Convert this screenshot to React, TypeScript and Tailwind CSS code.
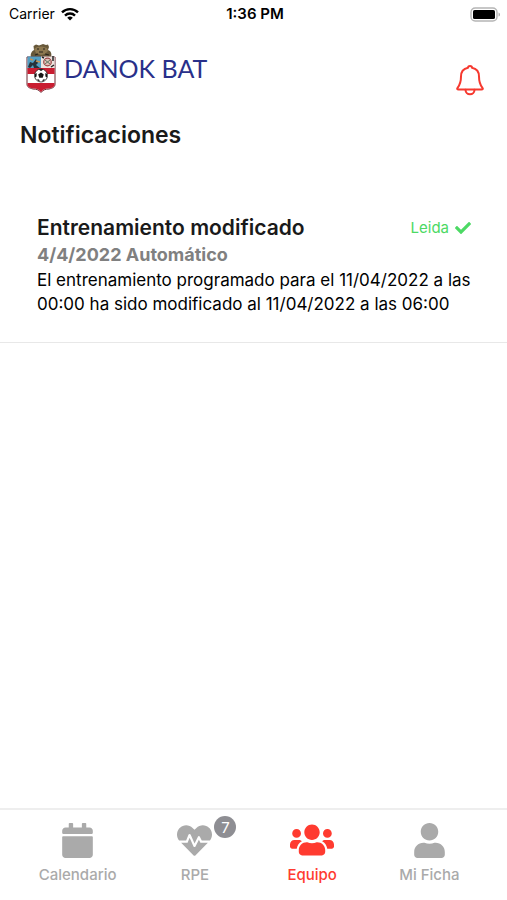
import type { ReactNode } from "react";
import { FaCalendar, FaCheck, FaHeartbeat, FaUser, FaUsers } from "react-icons/fa";

function WifiIcon() {
  return (
    <svg viewBox="0 0 18 14" className="h-[14px] w-[18px]" aria-hidden="true">
      <g fill="none" stroke="#000" strokeWidth="2.4">
        <path d="M1 5.4a11.4 11.4 0 0 1 16 0" />
        <path d="M4 8.6a7.1 7.1 0 0 1 10 0" />
      </g>
      <path d="M9 13.6 6.2 10.8a4 4 0 0 1 5.6 0z" />
    </svg>
  );
}

function BatteryIcon() {
  return (
    <svg viewBox="0 0 31 15" className="h-[15px] w-[31px]" aria-hidden="true">
      <rect x="1" y="1" width="26" height="13" rx="4.2" fill="#fff" stroke="#b5b5b5" strokeWidth="1.4" />
      <rect x="3" y="3" width="22" height="9" rx="1.6" />
      <path d="M28.6 5.4c1.7.6 1.7 3.6 0 4.2z" fill="#a0a0a0" />
    </svg>
  );
}

function BellIcon() {
  return (
    <svg viewBox="0 0 28 32" className="h-8 w-7" fill="none" stroke="#f6392f" strokeWidth="2" strokeLinejoin="round" strokeLinecap="round" aria-hidden="true">
      <path d="M12 3.700C12 1.300 16 1.300 16 3.700c4.300.8 7 4.200 7 8.800 0 6.500 1.200 8.500 3.400 11.300.8 1.100.4 1.700-.9 1.700h-23c-1.300 0-1.700-.6-.9-1.700C3.800 21 5 19 5 12.500c0-4.600 2.700-8 7-8.800z" />
      <path d="M9.500 25.800a4.500 4.500 0 0 0 9 0" />
    </svg>
  );
}

function Crest() {
  return (
    <svg viewBox="0 0 30 50" className="h-[50px] w-[30px]" aria-hidden="true">
      <path d="M5 14C4 11 6 8 8 7L7.500 3 10 1.500 13 2.500 17 1 20 2 22 1.500 23 4 22 7c3 1 4 4 3 7z" fill="#67583a" />
      <path d="M8 6 11 4 16 3.500l5 1.500 1 3-3 3-4 1-5-2z" fill="#8d7850" />
      <path d="M11 6h2M17 6h2M13 9h4M9 12l3-1M19 11l4 1" stroke="#29251c" strokeWidth="1.200" />
      <path d="M1 14h28v27c0 3-2 4-6 5-4 0-6 1-8 3.500C13 47 11 46 7 46c-4-1-6-2-6-5z" fill="#fff" stroke="#6c2931" />
      <path d="M1.500 13.500H15V25H1.500z" fill="#529fc4" />
      <path d="M2 24l2-5 3 1 3-4 2 4-2 2 4 3H8l-1-3-3 3z" fill="#25323b" />
      <path d="M4 16l3 1M10 18l4 1" stroke="#c49252" strokeWidth="1.500" />
      <path d="M15 13.500h13.500V25H15z" fill="#eee5e0" />
      <circle cx="21.500" cy="19" r="3.800" fill="#dfc1b7" stroke="#9b4848" strokeWidth="1.200" />
      <path d="m19 17 5 4m0-4-5 4" stroke="#607661" strokeWidth="1" />
      <path d="M27 13v5M16 14l2 1M25 24l3-2" stroke="#252525" strokeWidth="1.500" />
      <path d="M1.500 25h27v6h-27zM1.500 40h27v1.500c0 2.500-2 3.500-6 4-4 .2-6 1.500-7.500 3.500-1.500-2-3.500-3.300-7.500-3.500-4-.5-6-1.500-6-4z" fill="#c91d31" />
      <circle cx="15" cy="32.500" r="6.500" fill="#fff" stroke="#222" strokeWidth=".8" />
      <path d="m15 29.500 2.800 2-1.100 3.300h-3.400l-1.100-3.300zM12.500 26.600q2.500-1 5 0l-2.500 1.500zM8.900 30.900l1.800-.8-.1 3.300-1.600 1.100zM21.100 30.900l-1.800-.8.1 3.300 1.600 1.100zM11 36.300l2 .2.900 2q-2-.5-2.900-2.200zM19 36.300l-2 .2-.9 2q2-.5 2.900-2.200z" fill="#171717" />
    </svg>
  );
}

function Tab({ label, icon, badge, active = false }: { label: string; icon: ReactNode; badge?: number; active?: boolean }) {
  return (
    <button
      type="button"
      aria-current={active ? "page" : undefined}
      className={`flex flex-col items-center gap-[7px] text-[15px] leading-5 font-medium ${active ? "text-[#ff3b30]" : "text-[#aaaaaa]"}`}
    >
      <span className="relative flex h-9 items-center">
        {icon}
        {badge !== undefined && (
          <span className="absolute -top-[6px] left-full ml-[2px] flex size-[22px] items-center justify-center rounded-full bg-[#8e8e93] text-[15px] leading-none font-normal text-white">
            {badge}
          </span>
        )}
      </span>
      {label}
    </button>
  );
}

export default function App() {
  return (
    <div className="flex min-h-screen flex-col bg-white font-['Inter',sans-serif] text-[#1a1a1a]">
      <div className="grid h-7 grid-cols-3 items-center pr-[6px] pl-[9px] text-sm text-black">
        <div className="flex items-center gap-[6px]">
          <span>Carrier</span>
          <WifiIcon />
        </div>
        <span className="text-center text-[15px] font-semibold">1:36 PM</span>
        <div className="flex justify-end">
          <BatteryIcon />
        </div>
      </div>

      <header className="flex items-center justify-between pt-3 pr-[23px] pl-[26px]">
        <div className="flex items-center gap-2">
          <Crest />
          <span className="font-['Lato',sans-serif] text-[25px] leading-none text-[#29308a]">DANOK BAT</span>
        </div>
        <button type="button" aria-label="Notificaciones" className="pt-6">
          <BellIcon />
        </button>
      </header>

      <main className="flex-1">
        <h1 className="px-5 pt-[23px] text-[23px] leading-8 font-semibold">Notificaciones</h1>
        <article className="mt-[63px] border-b border-[#e8e8e8] pr-9 pb-[26px] pl-[37px]">
          <div className="flex items-center justify-between">
            <h2 className="text-[21px] leading-7 font-semibold">Entrenamiento modificado</h2>
            <span className="flex items-center gap-[6px] text-[15px] leading-5 text-[#4cd964]">
              Leida
              <FaCheck className="size-4" aria-hidden="true" />
            </span>
          </div>
          <p className="text-lg leading-[26px] font-bold text-[#808080]">4/4/2022 Automático</p>
          <p className="text-[17px] leading-6 text-black">
            El entrenamiento programado para el 11/04/2022 a las 00:00 ha sido modificado al 11/04/2022 a las 06:00
          </p>
        </article>
      </main>

      <nav className="grid grid-cols-4 border-t-2 border-[#eeeeee] px-[19px] pt-3 pb-[15px]">
        <Tab label="Calendario" icon={<FaCalendar size={35} />} />
        <Tab label="RPE" badge={7} icon={<FaHeartbeat size={35} />} />
        <Tab label="Equipo" active icon={<FaUsers size={44} />} />
        <Tab label="Mi Ficha" icon={<FaUser size={35} />} />
      </nav>
    </div>
  );
}
